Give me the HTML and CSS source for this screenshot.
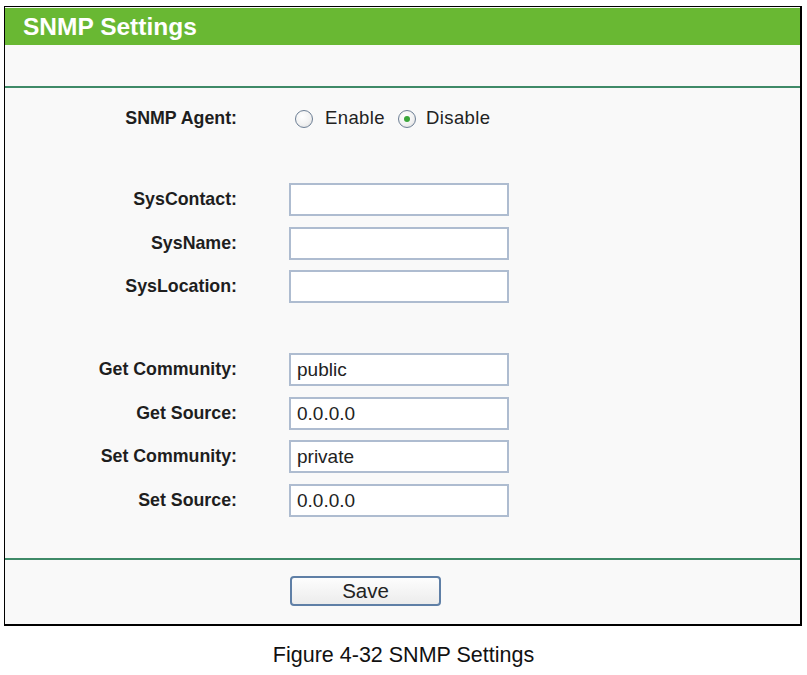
FILE: index.html
```html
<!DOCTYPE html>
<html>
<head>
<meta charset="utf-8">
<link rel="stylesheet" href="styles.css">
</head>
<body>
<div class="frame">
  <div class="title">SNMP Settings</div>
  <div class="band"></div>
  <div class="content">
    <div class="row agent">
      <div class="label">SNMP Agent:</div>
      <div class="radios">
        <span class="radio"></span><span class="rtext">Enable</span>
        <span class="radio checked"></span><span class="rtext">Disable</span>
      </div>
    </div>
    <div class="group first">
      <div class="row"><div class="label">SysContact:</div><div class="input"></div></div>
      <div class="row"><div class="label">SysName:</div><div class="input"></div></div>
      <div class="row"><div class="label">SysLocation:</div><div class="input"></div></div>
    </div>
    <div class="group">
      <div class="row"><div class="label">Get Community:</div><div class="input">public</div></div>
      <div class="row"><div class="label">Get Source:</div><div class="input">0.0.0.0</div></div>
      <div class="row"><div class="label">Set Community:</div><div class="input">private</div></div>
      <div class="row"><div class="label">Set Source:</div><div class="input">0.0.0.0</div></div>
    </div>
  </div>
  <div class="footer">
    <div class="button">Save</div>
  </div>
</div>
<p class="caption">Figure 4-32 SNMP Settings</p>
</body>
</html>
```
FILE: styles.css
```css
html, body {
  margin: 0;
  padding: 0;
  background: #ffffff;
  font-family: "Liberation Sans", Arial, sans-serif;
}
.frame {
  box-sizing: border-box;
  margin: 6px 0 0 4px;
  width: 798px;
  height: 620px;
  border-style: solid;
  border-color: #000;
  border-width: 1px 2px 2px 1px;
  background: #f9f9f9;
  padding-top: 1px;
  display: flex;
  flex-direction: column;
}
.title {
  height: 37px;
  background: #69b833;
  color: #ffffff;
  font-weight: bold;
  font-size: 24.5px;
  line-height: 37px;
  padding-left: 18px;
}
.band {
  height: 41px;
  border-bottom: 2px solid #3f8a68;
}
.content {
  box-sizing: border-box;
  height: 470px;
  padding-top: 13.5px;
}
.row {
  display: grid;
  grid-template-columns: 232px 220px;
  column-gap: 52px;
  align-items: center;
  height: 33px;
}
.agent {
  margin-bottom: 48.5px;
}
.group {
  display: flex;
  flex-direction: column;
  gap: 10.5px;
}
.group.first {
  margin-bottom: 50px;
}
.label {
  text-align: right;
  font-weight: bold;
  font-size: 17.8px;
  color: #1e1e1e;
}
.input {
  box-sizing: border-box;
  height: 33px;
  width: 220px;
  border: 2px solid #aebcd0;
  background: #ffffff;
  font-size: 19px;
  line-height: 29px;
  padding-left: 6px;
  color: #222;
}
.radios {
  display: flex;
  align-items: center;
  padding-left: 6px;
  font-size: 18.5px;
  color: #222;
  letter-spacing: 0.4px;
}
.radio {
  box-sizing: border-box;
  width: 18px;
  height: 18px;
  border-radius: 50%;
  border: 1.5px solid #6d7f95;
  background: radial-gradient(circle at 40% 35%, #ffffff 0%, #f2f2f2 55%, #d8d8d8 100%);
  display: flex;
  align-items: center;
  justify-content: center;
  margin-top: 2px;
}
.radio.checked::after {
  content: "";
  width: 6px;
  height: 6px;
  border-radius: 50%;
  background: #3aa63a;
}
.radio + .rtext {
  margin-left: 12px;
  margin-right: 13px;
}
.radio.checked + .rtext {
  margin-left: 10px;
}
.footer {
  flex: 1;
  border-top: 2px solid #3f8a68;
  padding-top: 16px;
  padding-left: 285px;
}
.button {
  box-sizing: border-box;
  width: 151px;
  height: 30px;
  border: 2px solid #5f7fa6;
  border-radius: 4px;
  background: linear-gradient(#fdfdfd, #ececec);
  text-align: center;
  font-size: 20.5px;
  line-height: 26px;
  color: #222;
}
.caption {
  margin: 17px 0 0 0;
  text-align: center;
  font-size: 21.5px;
  line-height: 24px;
  color: #111;
}
```
